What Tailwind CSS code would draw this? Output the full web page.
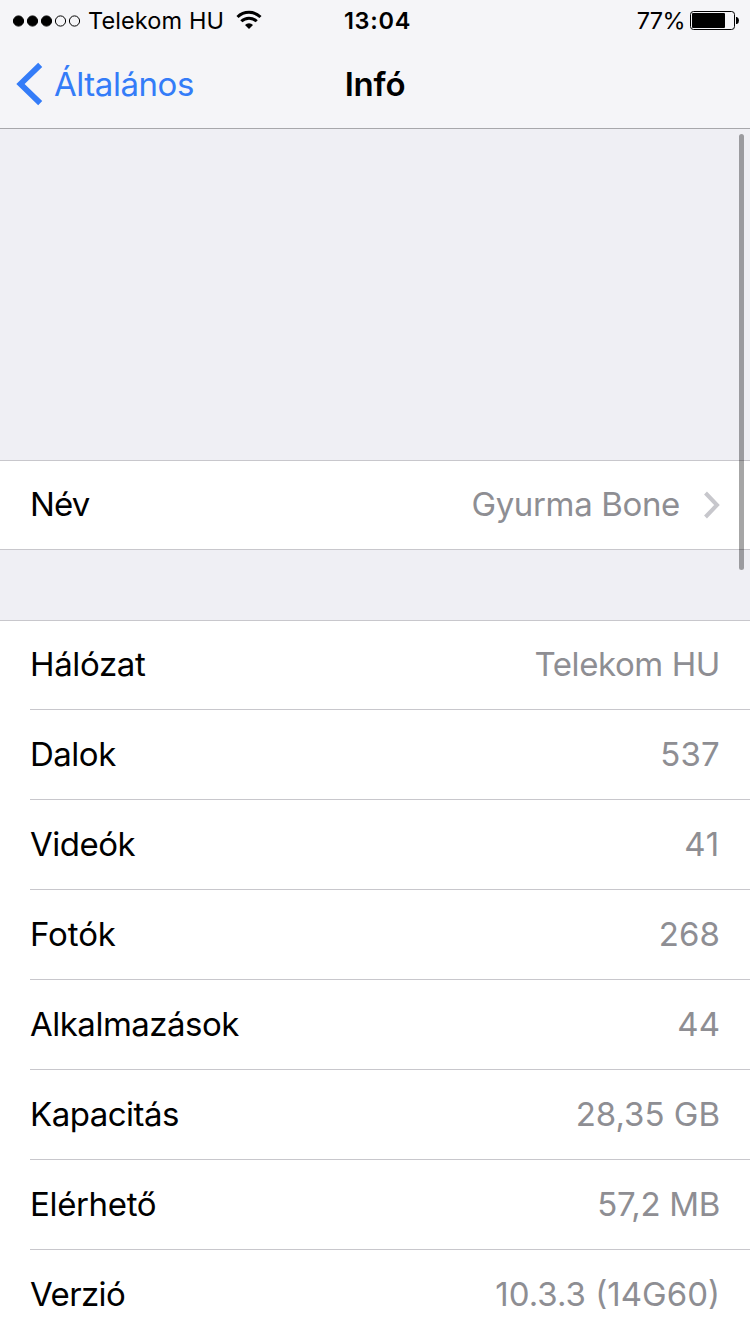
<!DOCTYPE html>
<html lang="hu">
<head>
<meta charset="utf-8">
<title>Infó</title>
<script src="https://cdn.jsdelivr.net/npm/@tailwindcss/browser@4"></script>
</head>
<body class="relative w-[750px] h-[1334px] overflow-hidden bg-[#efeff4] font-['Inter','Liberation_Sans',sans-serif] text-black">
<header class="h-[129px] bg-[#f5f5f8] border-b border-[#a7a7ab]">
  <div class="grid h-10 grid-cols-[1fr_auto_1fr] items-center pl-3 pr-[11px] text-[23.5px] leading-[40px]">
    <div class="flex items-center">
      <svg class="w-[70px] h-3" viewBox="0 0 70 12"><g stroke="#000"><circle cx="6.500" cy="6" r="5.100"/><circle cx="20.500" cy="6" r="5.100"/><circle cx="34.500" cy="6" r="5.100"/><circle cx="48.500" cy="6" r="5.100" fill="none"/><circle cx="62.500" cy="6" r="5.100" fill="none"/></g></svg>
      <span class="ml-[6px] mt-px w-[148px] tracking-[0.1px] whitespace-nowrap">Telekom HU</span>
      <svg class="w-[26px] h-5 -mt-px" viewBox="0 0 26 20"><g fill="none" stroke="#000" stroke-width="3"><path d="M1.500 7a16.500 16.500 0 0 1 23 0"/><path d="M5.300 11.300a11 11 0 0 1 15.400 0"/></g><path d="M13 19l-4-4.100a5.700 5.700 0 0 1 8 0z"/></svg>
    </div>
    <span class="ml-1 mt-px font-semibold tracking-[0.7px]">13:04</span>
    <div class="flex items-center justify-end">
      <span class="mr-[5px] mt-px tracking-[-0.6px] whitespace-nowrap">77%</span>
      <svg class="w-[49px] h-5 -mt-px" viewBox="0 0 49 20"><rect x=".5" y="1.500" width="44" height="18" rx="3" fill="none" stroke="#000"/><rect x="2" y="3" width="33" height="15" rx="1"/><path d="M46 7h1q2 1 2 3.500t-2 3.500h-1z"/></svg>
    </div>
  </div>
  <div class="grid h-[88px] grid-cols-[1fr_auto_1fr] items-center px-4">
    <div class="flex items-center text-[#347cf8]">
      <svg class="w-7 h-11 -mt-px" viewBox="0 0 28 44"><path d="M24.200 2.800L4.500 22L24.200 41.200" fill="none" stroke="currentColor" stroke-width="5.800"/></svg>
      <span class="ml-[10px] mt-0.5 text-[33px] tracking-[-0.45px]">Általános</span>
    </div>
    <h1 class="mt-0.5 text-[33px] font-semibold tracking-[-0.2px]">Infó</h1>
  </div>
</header>
<main class="text-[33px]">
  <section class="mt-[331px] flex h-[90px] justify-between border-y border-[#c8c7cc] bg-white pl-[30px] pr-[30px] leading-[86px]">
    <span class="tracking-[-0.9px]">Név</span>
    <span class="flex text-[#8e8e93]"><span class="tracking-[-0.35px]">Gyurma Bone</span>
      <svg class="ml-6 mt-[30px] w-4 h-7" viewBox="0 0 16 28"><path d="M1.500 2L13 14L1.500 26" fill="none" stroke="#c7c7cc" stroke-width="4"/></svg></span>
  </section>
  <section class="mt-[70px] border-t border-[#c8c7cc] bg-white pl-[30px] leading-[88px] [&_b]:font-normal [&_b]:text-[#8e8e93] [&>div]:flex [&>div]:h-[88px] [&>div]:justify-between [&>div]:pr-[30px] [&>div+div]:h-[90px] [&>div+div]:border-t [&>div+div]:border-[#c8c7cc]">
    <div class="leading-[86px]"><span class="tracking-[-0.35px]">Hálózat</span><b class="tracking-[-0.4px]">Telekom HU</b></div>
    <div><span class="tracking-[-0.5px]">Dalok</span><b class="tracking-[0.2px]">537</b></div>
    <div><span class="tracking-[-0.5px]">Videók</span><b class="tracking-[0.8px]">41</b></div>
    <div><span class="tracking-[-0.1px]">Fotók</span><b class="tracking-[0.1px]">268</b></div>
    <div><span class="tracking-[-0.5px]">Alkalmazások</span><b>44</b></div>
    <div><span class="tracking-[-0.5px]">Kapacitás</span><b>28,35 GB</b></div>
    <div><span class="tracking-[-0.35px]">Elérhető</span><b class="tracking-[-0.3px]">57,2 MB</b></div>
    <div><span class="tracking-[-0.6px]">Verzió</span><b>10.3.3 (14G60)</b></div>
  </section>
</main>
<div class="absolute left-[739px] top-[134px] h-[436px] w-[5px] rounded-full bg-black/35"></div>
</body>
</html>
